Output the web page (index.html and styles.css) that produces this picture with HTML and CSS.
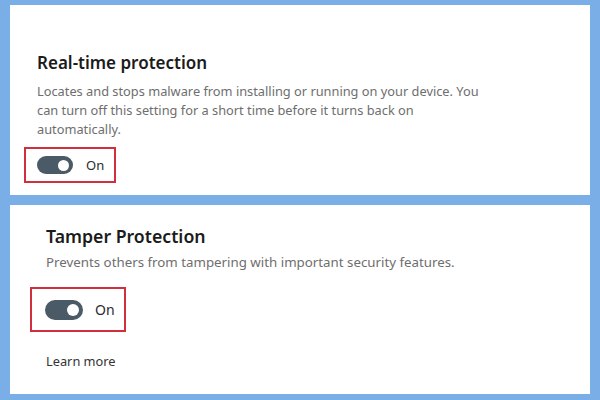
FILE: index.html
```html
<!DOCTYPE html>
<html>
<head>
<meta charset="utf-8">
<link rel="stylesheet" href="styles.css">
</head>
<body>
<div class="frame">
  <section class="panel panel-rt">
    <h2 class="title">Real-time protection</h2>
    <p class="desc">Locates and stops malware from installing or running on your device. You can turn off this setting for a short time before it turns back on automatically.</p>
    <div class="hl">
      <span class="toggle"><span class="knob"></span></span>
      <span class="state">On</span>
    </div>
  </section>
  <section class="panel panel-tp">
    <h2 class="title">Tamper Protection</h2>
    <p class="desc">Prevents others from tampering with important security features.</p>
    <div class="hl">
      <span class="toggle"><span class="knob"></span></span>
      <span class="state">On</span>
    </div>
    <a class="learn">Learn more</a>
  </section>
</div>
</body>
</html>
```

FILE: styles.css
```css
html, body {
  margin: 0;
  padding: 0;
  background: #7aaee6;
  width: 600px;
  height: 400px;
  overflow: hidden;
}
.frame {
  display: flex;
  flex-direction: column;
  gap: 10px;
  padding: 5px 10px 0 10px;
  font-family: "Noto Sans", "Open Sans", sans-serif;
}
.panel {
  background: #fff;
  display: flex;
  flex-direction: column;
  align-items: flex-start;
}
.panel-rt {
  height: 190px;
  box-sizing: border-box;
  padding: 46px 0 0 27px;
}
.panel-tp {
  height: 189px;
  box-sizing: border-box;
  padding: 19px 0 0 36px;
}
.title {
  margin: 0;
  font-weight: 600;
  color: #1b1b1b;
  font-size: 17px;
  line-height: 24px;
}
.desc {
  margin: 7px 0 0 0;
  color: #6e6e6e;
  font-size: 12.8px;
  line-height: 19px;
  width: 452px;
}
.panel-tp .title { font-size: 17.7px; }
.panel-tp .desc { font-size: 13.3px; margin-top: 5px; width: 520px; }
.hl {
  display: flex;
  align-items: center;
  border: 2px solid #d22f3e;
  box-sizing: border-box;
}
.panel-rt .hl {
  margin: 8px 0 0 -13px;
  width: 92px;
  height: 36px;
  padding-left: 11px;
  gap: 13px;
}
.panel-tp .hl {
  margin: 15px 0 0 -16px;
  width: 96px;
  height: 45px;
  padding-left: 13px;
  gap: 12px;
}
.toggle {
  display: flex;
  align-items: center;
  justify-content: flex-end;
  background: #4a5a66;
  border-radius: 10px;
  box-sizing: border-box;
}
.panel-rt .toggle { width: 36px; height: 18px; padding-right: 4px; }
.panel-tp .toggle { width: 38px; height: 20px; padding-right: 4px; }
.knob {
  background: #fff;
  border-radius: 50%;
}
.panel-rt .knob { width: 11px; height: 11px; }
.panel-tp .knob { width: 12px; height: 12px; }
.state {
  color: #2b2b2b;
  font-size: 13px;
}
.panel-tp .state { font-size: 14px; }
.learn {
  margin-top: 20px;
  color: #333;
  font-size: 12.8px;
}
```
